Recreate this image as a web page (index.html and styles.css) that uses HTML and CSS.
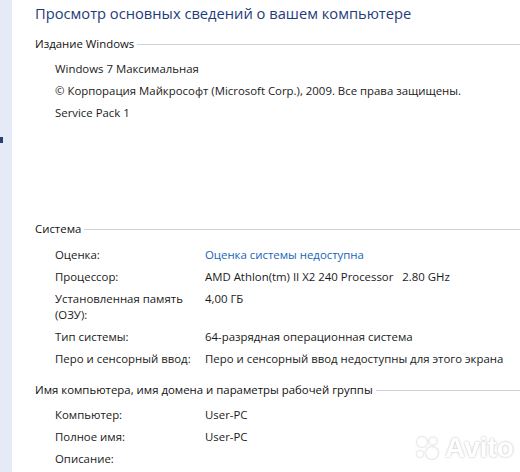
FILE: index.html
```html
<!DOCTYPE html>
<html lang="ru">
<head>
<meta charset="utf-8">
<link rel="stylesheet" href="styles.css">
</head>
<body>
<div class="window">
  <aside class="side"><span class="side-mark"></span></aside>
  <main class="main">
    <h1 class="title">Просмотр основных сведений о вашем компьютере</h1>

    <section class="sec sec-edition">
      <h2 class="sec-head">Издание Windows</h2>
      <div class="line">Windows 7 Максимальная</div>
      <div class="line">© Корпорация Майкрософт (Microsoft Corp.), 2009. Все права защищены.</div>
      <div class="line">Service Pack 1</div>
    </section>

    <section class="sec sec-system">
      <h2 class="sec-head">Система</h2>
      <div class="row"><div class="k">Оценка:</div><div class="v link">Оценка системы недоступна</div></div>
      <div class="row"><div class="k">Процессор:</div><div class="v">AMD Athlon(tm) II X2 240 Processor&nbsp;&nbsp; 2.80 GHz</div></div>
      <div class="row"><div class="k">Установленная память (ОЗУ):</div><div class="v">4,00 ГБ</div></div>
      <div class="row"><div class="k">Тип системы:</div><div class="v">64-разрядная операционная система</div></div>
      <div class="row"><div class="k">Перо и сенсорный ввод:</div><div class="v">Перо и сенсорный ввод недоступны для этого экрана</div></div>
    </section>

    <section class="sec sec-name">
      <h2 class="sec-head">Имя компьютера, имя домена и параметры рабочей группы</h2>
      <div class="row"><div class="k">Компьютер:</div><div class="v">User-PC</div></div>
      <div class="row"><div class="k">Полное имя:</div><div class="v">User-PC</div></div>
      <div class="row"><div class="k">Описание:</div><div class="v"></div></div>
    </section>
  </main>
  <div class="watermark">
    <svg class="wm-logo" width="28" height="26" viewBox="0 0 28 26">
      <circle cx="8" cy="7" r="5"/>
      <circle cx="19" cy="6" r="3.5"/>
      <circle cx="6" cy="19" r="3"/>
      <circle cx="18" cy="18" r="6"/>
    </svg>
    <span class="wm-text">Avito</span>
  </div>
</div>
</body>
</html>
```
FILE: styles.css
```css
* { box-sizing: border-box; }
html, body { margin: 0; padding: 0; background: #fff; }
body {
  width: 520px;
  height: 472px;
  overflow: hidden;
  font-family: "Open Sans", "Noto Sans", sans-serif;
  font-size: 11.4px;
  color: #1a1a1a;
}
.window {
  position: relative;
  display: flex;
  height: 472px;
}
.side {
  flex: 0 0 12px;
  background: #e4ebf6;
  padding-top: 137px;
}
.side-mark {
  display: block;
  width: 3px;
  height: 6px;
  background: #2c3f6e;
}
.main {
  flex: 1;
  padding-left: 23px;
  min-width: 0;
}
.title {
  margin: 2px 0 0;
  font-size: 14.7px;
  font-weight: normal;
  line-height: 22px;
  color: #1f3c7a;
  white-space: nowrap;
}
.sec-head {
  display: flex;
  align-items: center;
  margin: 0;
  font-size: 11.4px;
  font-weight: normal;
  line-height: 16px;
  color: #111;
  white-space: nowrap;
}
.sec-head::after {
  content: "";
  flex: 1;
  margin-left: 3px;
  border-top: 1px solid #cfd3d8;
}
.sec-edition { margin-top: 12px; }
.sec-edition .sec-head { margin-bottom: 6px; }
.sec-system { margin-top: 97px; }
.sec-system .sec-head { margin-bottom: 7px; }
.sec-name { margin-top: 12px; }
.sec-name .sec-head { margin-bottom: 6px; }
.line, .row {
  padding: 3px 0 3px 20px;
  line-height: 16px;
  white-space: nowrap;
}
.row {
  display: grid;
  grid-template-columns: 150px 1fr;
}
.k { white-space: normal; padding-right: 2px; }
.link { color: #1565b8; }
.watermark {
  position: absolute;
  left: 414px;
  top: 434px;
  display: flex;
  align-items: center;
  gap: 3px;
  color: #fff;
  filter: drop-shadow(0 0 1.2px rgba(0,0,0,0.28));
}
.wm-logo { fill: #fff; }
.wm-text {
  font-family: "Liberation Sans", sans-serif;
  font-weight: bold;
  font-size: 28px;
  line-height: 28px;
}
```
